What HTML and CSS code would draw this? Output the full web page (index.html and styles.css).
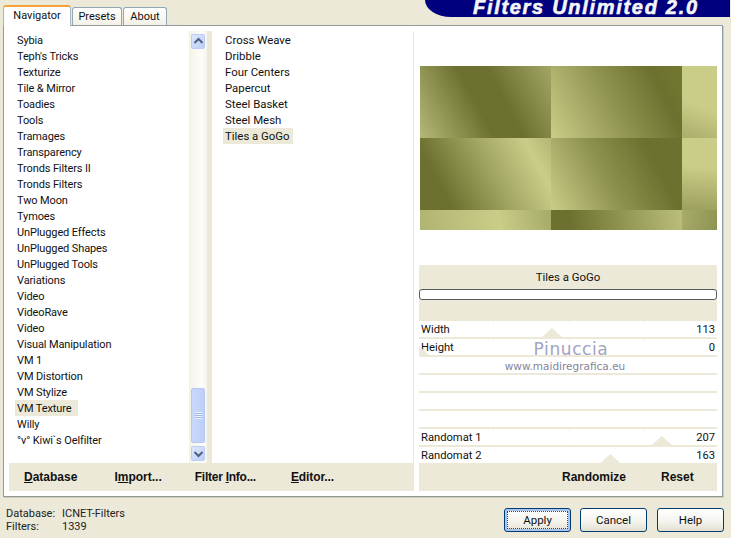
FILE: index.html
```html
<!DOCTYPE html>
<html lang="en">
<head>
<meta charset="utf-8">
<title>Filters Unlimited 2.0</title>
<link rel="stylesheet" href="styles.css">
</head>
<body>
<div class="dialog">
  <header class="top">
    <nav class="tabs">
      <div class="tab tab-active">Navigator</div>
      <div class="tab tab-presets">Presets</div>
      <div class="tab tab-about">About</div>
    </nav>
    <div class="banner"><span class="banner-text">Filters Unlimited 2.0</span></div>
  </header>
  <main class="panel">
    <div class="workspace">
      <section class="browser">
        <ul class="list list-cats">
          <li>Sybia</li><li>Teph's Tricks</li><li>Texturize</li><li>Tile &amp; Mirror</li><li>Toadies</li><li>Tools</li><li>Tramages</li><li>Transparency</li><li>Tronds Filters II</li><li>Tronds Filters</li><li>Two Moon</li><li>Tymoes</li><li>UnPlugged Effects</li><li>UnPlugged Shapes</li><li>UnPlugged Tools</li><li>Variations</li><li>Video</li><li>VideoRave</li><li>Video</li><li>Visual Manipulation</li><li>VM 1</li><li>VM Distortion</li><li>VM Stylize</li><li><span class="sel">VM Texture</span></li><li>Willy</li><li>°v° Kiwi`s Oelfilter</li>
        </ul>
        <div class="scrollbar">
          <div class="sb-btn"><svg width="15" height="15" viewBox="0 0 15 15"><path d="M3.5 9 7.5 5l4 4" fill="none" stroke="#4d6185" stroke-width="2"/></svg></div>
          <div class="sb-thumb"><span class="grip"></span></div>
          <div class="sb-btn"><svg width="15" height="15" viewBox="0 0 15 15"><path d="M3.5 6 7.5 10l4-4" fill="none" stroke="#4d6185" stroke-width="2"/></svg></div>
        </div>
      </section>
      <div class="divider"></div>
      <ul class="list list-filters">
        <li>Cross Weave</li><li>Dribble</li><li>Four Centers</li><li>Papercut</li><li>Steel Basket</li><li>Steel Mesh</li><li><span class="sel">Tiles a GoGo</span></li>
      </ul>
      <div class="bar bar-left">
        <span class="act act-db"><u>D</u>atabase</span>
        <span class="act act-imp">I<u>m</u>port...</span>
        <span class="act act-info">Filter <u>I</u>nfo...</span>
        <span class="act act-edit"><u>E</u>ditor...</span>
      </div>
      <section class="side">
        <div class="preview">
          <div class="tile t1"></div><div class="tile t2"></div><div class="tile t3"></div>
          <div class="tile t4"></div><div class="tile t5"></div><div class="tile t6"></div>
          <div class="tile t7"></div><div class="tile t8"></div><div class="tile t9"></div>
        </div>
        <div class="filter-head">
          <div class="filter-name">Tiles a GoGo</div>
          <div class="progress"></div>
        </div>
        <div class="sliders">
          <div class="row ticked"><span>Width</span><span>113</span><i class="thumb" style="left:44.6%"></i></div>
          <div class="row ticked"><span>Height</span><span>0</span><i class="thumb" style="left:0%"></i></div>
          <div class="row"></div>
          <div class="row"></div>
          <div class="row"></div>
          <div class="row"></div>
          <div class="row ticked"><span>Randomat 1</span><span>207</span><i class="thumb" style="left:81.5%"></i></div>
          <div class="row ticked"><span>Randomat 2</span><span>163</span><i class="thumb" style="left:64.2%"></i></div>
          <div class="watermark"><div class="wm-name">Pinuccia</div><div class="wm-url">www.maidiregrafica.eu</div></div>
        </div>
        <div class="bar bar-right">
          <span class="act act-rand">Randomize</span>
          <span class="act">Reset</span>
        </div>
      </section>
    </div>
  </main>
  <footer class="foot">
    <dl class="status">
      <dt>Database:</dt><dd>ICNET-Filters</dd>
      <dt>Filters:</dt><dd>1339</dd>
    </dl>
    <div class="buttons">
      <button class="btn btn-default" type="button"><span>Apply</span></button>
      <button class="btn" type="button"><span>Cancel</span></button>
      <button class="btn btn-help" type="button"><span>Help</span></button>
    </div>
  </footer>
</div>
</body>
</html>
```
FILE: styles.css
```css
* { box-sizing: border-box; }
html, body { margin: 0; padding: 0; }
body {
  width: 731px;
  height: 538px;
  overflow: hidden;
  background: #ece9d8;
  font-family: Roboto, "Liberation Sans", Arial, sans-serif;
  font-size: 11.5px;
  color: #111;
}
.dialog { width: 731px; height: 538px; display: flex; flex-direction: column; }

/* header */
.top { height: 25px; display: flex; align-items: flex-start; padding-left: 3px; }
.tabs { display: flex; align-items: flex-end; height: 26px; gap: 1px; position: relative; z-index: 1; }
.tab {
  height: 18px;
  border: 1px solid #91a7b4;
  border-bottom: 0;
  border-radius: 3px 3px 0 0;
  background: linear-gradient(#fff, #f3f1e6);
  font-size: 11px;
  line-height: 18px;
  text-align: center;
}
.tab-active {
  width: 68px;
  height: 21px;
  background: #fff;
  border-color: #aab6bc;
  border-top: 2px solid #f2a33a;
  line-height: 17px;
}
.tab-presets { width: 50px; margin-bottom: 1px; }
.tab-about { width: 44px; margin-bottom: 1px; }
.banner {
  margin-left: auto;
  width: 305px;
  margin-right: 1px;
  height: 17px;
  background: #00007f;
  border-radius: 0 0 0 26px / 0 0 0 17px;
  padding-left: 48px;
}
.banner-text {
  display: block;
  font: italic bold 20px/14px "Liberation Sans", Arial, sans-serif;
  letter-spacing: 1.7px;
  color: #f5f5f5;
  white-space: nowrap;
  -webkit-text-stroke: 0.6px #f5f5f5;
}

/* panel */
.panel {
  margin-left: 3px;
  width: 720px;
  height: 472px;
  background: #fff;
  border: 1px solid #919b9c;
  border-right-color: #8f9aa8;
  border-bottom-color: #8f9699;
  box-shadow: 1px 1px 0 #d0cdbb;
  padding: 5px;
}
.workspace {
  display: grid;
  grid-template-columns: 198px 5px 202px 5px 298px;
  grid-template-rows: 432px 28px;
  height: 460px;
}
.browser { grid-column: 1; grid-row: 1; display: flex; min-height: 0; }
.divider { grid-column: 2; grid-row: 1; background: #ece9d8; }
.list {
  list-style: none;
  margin: 0;
  padding: 1px 0 0 6px;
  line-height: 16px;
  white-space: nowrap;
}
.list li { height: 16px; padding-left: 2px; }
.list-cats { width: 180px; font-size: 11px; letter-spacing: -0.12px; line-height: 18px; }
.list-filters {
  grid-column: 3;
  grid-row: 1;
  padding-left: 11px;
  border-right: 1px solid #ece9d8;
  font-size: 11.4px;
}
.sel { display: inline-block; background: #ece9d8; margin-left: -2px; padding: 0 2px; height: 16px; vertical-align: top; }
.list-cats .sel { width: 63px; }
.list-filters .sel { width: 70px; }

/* scrollbar */
.scrollbar {
  width: 18px;
  background: linear-gradient(90deg, #f4f2e6, #fdfdfa 70%, #f6f5ec);
  padding: 3px 2px 2px;
  display: flex;
  flex-direction: column;
}
.sb-btn {
  width: 14px;
  height: 15px;
  flex: none;
  background: linear-gradient(135deg, #dfe8fd, #bccdf6);
  border: 1px solid #b9cdf6;
  border-radius: 2px;
  display: flex;
  align-items: center;
  justify-content: center;
}
.sb-btn svg { flex: none; }
.sb-thumb {
  width: 14px;
  height: 55px;
  margin-top: auto;
  margin-bottom: 3px;
  background: linear-gradient(90deg, #c9d7fb, #bfcff8);
  border: 1px solid #b4c8f4;
  border-radius: 2px;
  display: flex;
  align-items: center;
  justify-content: center;
}
.grip {
  width: 7px;
  height: 7px;
  background: repeating-linear-gradient(#eef3ff 0 1px, #a3b6e4 1px 2px);
}

/* action bars */
.bar {
  background: #ece9d8;
  display: flex;
  align-items: center;
  font-family: "Liberation Sans", Arial, sans-serif;
  font-size: 12px;
  font-weight: bold;
  white-space: nowrap;
}
.bar-left { grid-column: 1 / 4; grid-row: 2; padding-left: 15px; }
.act-db { margin-right: 37px; }
.act-imp { margin-right: 33px; }
.act-info { margin-right: 35px; letter-spacing: -0.25px; }
.act-edit { letter-spacing: -0.1px; }
.bar-right { height: 28px; flex: none; padding-left: 143px; }
.act-rand { margin-right: 35px; }

/* right side */
.side { grid-column: 5; grid-row: 1 / 3; display: flex; flex-direction: column; }
.preview {
  margin-top: 35px;
  height: 164px;
  flex: none;
  display: grid;
  grid-template-columns: 131px 131px 35px;
  grid-template-rows: 72px 72px 20px;
  margin-bottom: 35px;
  margin-left: 1px;
  width: 297px;
}
.tile { min-width: 0; }
.t1 { background: linear-gradient(242deg, #a3a766 0%, #6c712f 38%, #6c712f 56%, #b5b977 100%); }
.t2 { background: linear-gradient(62deg, #c9cd87 0%, #8f9350 48%, #6c712f 80%, #73782f 100%); }
.t3 { background: linear-gradient(200deg, #c9cd87 0%, #c9cd87 55%, #a9ad6a 100%); }
.t4 { background: linear-gradient(62deg, #6c712f 20%, #a2a663 55%, #c9cd87 84%, #b2b672 100%); }
.t5 { background: linear-gradient(62deg, #c9cd87 0%, #8f9350 42%, #6c712f 76%, #6c712f 100%); }
.t6 { background: linear-gradient(185deg, #c9cd87 0%, #c9cd87 40%, #9ca05d 100%); }
.t7 { background: linear-gradient(80deg, #b0b471 0%, #c9cd87 60%, #a6aa68 100%); }
.t8 { background: linear-gradient(80deg, #6c712f 15%, #bbbf7b 100%); }
.t9 { background: linear-gradient(100deg, #a8ac6a, #8f9352); }
.filter-head { height: 56px; flex: none; background: #ece9d8; display: flex; flex-direction: column; }
.filter-name { height: 24px; line-height: 24px; text-align: center; font-size: 11.4px; }
.progress {
  height: 11px;
  background: #fff;
  border: 1px solid #565d5f;
  border-radius: 3px;
}
.sliders { position: relative; height: 142px; flex: none; font-size: 11.2px; }
.row {
  position: relative;
  height: 18px;
  border-bottom: 2px solid #ece9d8;
  padding: 1px 2px 0;
  display: flex;
  justify-content: space-between;
  line-height: 16px;
  overflow: hidden;
}
.row:nth-last-child(2) { height: 16px; border-bottom: 0; }
.ticked {
  background:
    linear-gradient(#f3f1e6, #f3f1e6) 74px 0 / 1px 2px no-repeat,
    linear-gradient(#f3f1e6, #f3f1e6) 150px 0 / 1px 2px no-repeat,
    linear-gradient(#f3f1e6, #f3f1e6) 224px 0 / 1px 2px no-repeat;
}
.thumb {
  position: absolute;
  bottom: 0;
  width: 20px;
  height: 9px;
  margin-left: -10px;
  background: #ece9d8;
  clip-path: polygon(50% 0, 100% 100%, 0 100%);
}
.watermark {
  position: absolute;
  left: 76px;
  top: 18px;
  width: 140px;
  text-align: center;
  line-height: 1;
}
.wm-name {
  font-family: "DejaVu Sans", sans-serif;
  font-size: 17px;
  letter-spacing: 0.6px;
  color: #a3a3c2;
  height: 21px;
  line-height: 21px;
  padding-left: 12px;
  text-shadow: 0 0 1px #fff;
}
.wm-url {
  font-family: "DejaVu Sans", sans-serif;
  font-size: 10.5px;
  color: #85859a;
  line-height: 13px;
  white-space: nowrap;
  text-shadow: 0 0 1px #fff;
}

/* footer */
.foot { flex: 1; display: flex; justify-content: space-between; padding: 0 7px 0 6px; }
.status {
  margin: 10px 0 0;
  display: grid;
  grid-template-columns: 56px auto;
  grid-auto-rows: 13px;
  line-height: 13px;
  font-size: 11px;
  color: #222;
  align-content: start;
}
.status dd { margin: 0; }
.buttons { display: flex; gap: 9px; padding-top: 11px; align-items: flex-start; }
.btn {
  width: 67px;
  height: 24px;
  padding: 0;
  border: 1px solid #003c74;
  border-radius: 3px;
  background: linear-gradient(#fff, #f4f3ec 60%, #e3e0d0);
  font: 11.5px Roboto, "Liberation Sans", Arial, sans-serif;
  color: #111;
}
.btn-help { margin-left: 1px; }
.btn-default {
  box-shadow: inset 0 0 0 2px #a9c4ee;
  background: linear-gradient(#fff, #f4f3ec 60%, #e3e0d0);
}
.btn-default span {
  display: block;
  margin: 2px;
  height: 18px;
  line-height: 16px;
  border: 1px dotted #444;
}
```
